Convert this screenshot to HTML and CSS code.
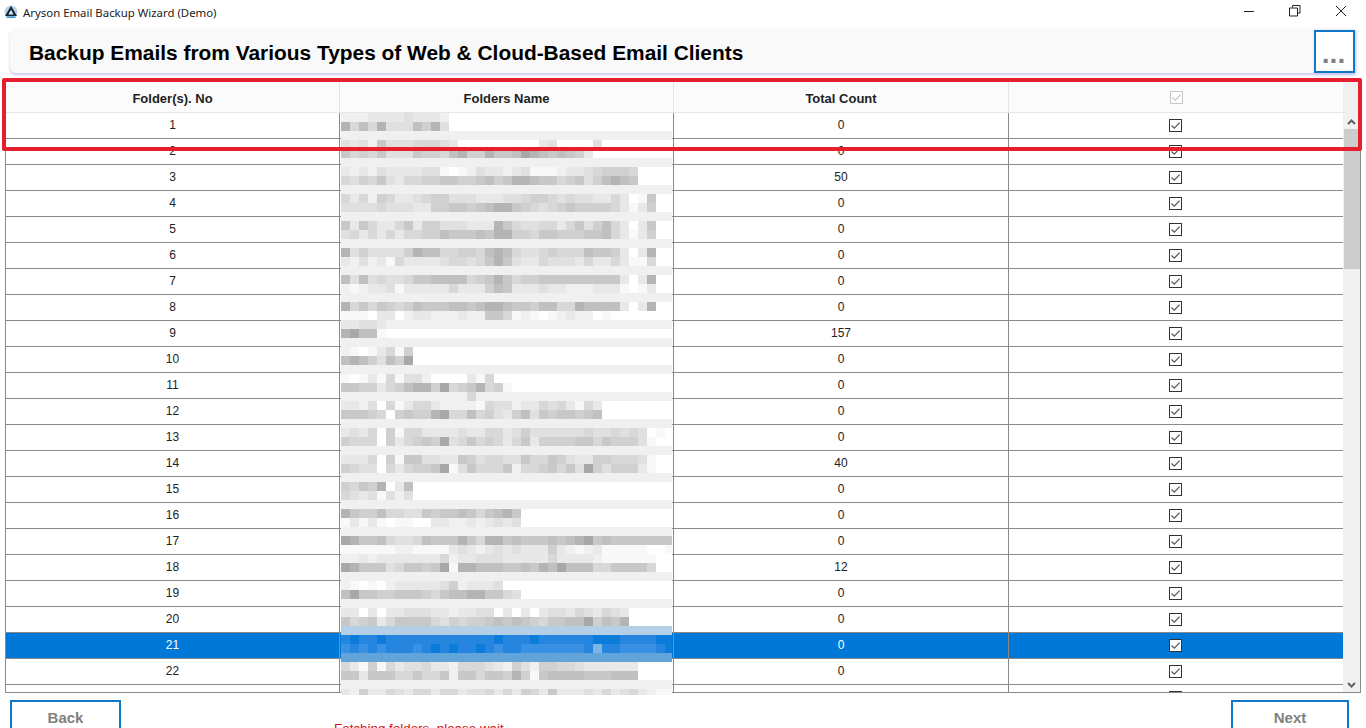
FILE: index.html
```html
<!DOCTYPE html>
<html lang="en">
<head>
<meta charset="utf-8">
<title>Aryson Email Backup Wizard (Demo)</title>
<link rel="stylesheet" href="styles.css">
</head>
<body>
<svg class="defs" width="0" height="0" aria-hidden="true">
  <symbol id="chk" viewBox="0 0 13 13">
    <rect x="0.5" y="0.5" width="12" height="12" fill="#fff" stroke="#333"/>
    <path d="M2.5 6.5 L5.3 9.2 L10.6 3.6" fill="none" stroke="#5a5a5a" stroke-width="1.3"/>
  </symbol>
  <symbol id="chk-off" viewBox="0 0 13 13">
    <rect x="0.5" y="0.5" width="12" height="12" fill="#fff" stroke="#c8c8c8"/>
    <path d="M2.5 6.5 L5.3 9.2 L10.6 3.6" fill="none" stroke="#c8c8c8" stroke-width="1.3"/>
  </symbol>
</svg>
<div class="app">
  <header class="titlebar">
    <svg class="logo" viewBox="0 0 14 14" width="14" height="14">
      <circle cx="7" cy="7" r="6.5" fill="#b9d2e6"/>
      <path d="M7 0.8 L13 11 H1 Z" fill="#14263c"/>
      <path d="M7 4.8 L9.6 9.4 H4.4 Z" fill="#dfe9f2"/>
      <path d="M2.4 12.2 H11.6" stroke="#3f9bd8" stroke-width="1.5"/>
    </svg>
    <span class="app-name">Aryson Email Backup Wizard (Demo)</span>
    <div class="win-controls">
      <svg width="12" height="12" viewBox="0 0 12 12"><path d="M1 6.5 H11" stroke="#222" stroke-width="1"/></svg>
      <svg width="12" height="12" viewBox="0 0 12 12"><path d="M3.5 2.5 V0.5 H11 V8 H9 M0.5 3 H8.5 V11 H0.5 Z" fill="none" stroke="#222"/></svg>
      <svg width="12" height="12" viewBox="0 0 12 12"><path d="M1 1 L11 11 M11 1 L1 11" stroke="#222" stroke-width="1"/></svg>
    </div>
  </header>
  <section class="banner">
    <h1 class="banner-title">Backup Emails from Various Types of Web &amp; Cloud-Based Email Clients</h1>
    <button class="more-btn" type="button"><span class="more-dots">...</span></button>
  </section>
  <main class="grid-wrap">
    <div class="grid-body">
      <table class="grid">
        <thead>
          <tr><th>Folder(s). No</th><th>Folders Name</th><th>Total Count</th><th><svg class="box box-head"><use href="#chk-off"/></svg></th></tr>
        </thead>
        <tbody>
          <tr><td>1</td><td></td><td>0</td><td><svg class="box"><use href="#chk"/></svg></td></tr>
          <tr><td>2</td><td></td><td>0</td><td><svg class="box"><use href="#chk"/></svg></td></tr>
          <tr><td>3</td><td></td><td>50</td><td><svg class="box"><use href="#chk"/></svg></td></tr>
          <tr><td>4</td><td></td><td>0</td><td><svg class="box"><use href="#chk"/></svg></td></tr>
          <tr><td>5</td><td></td><td>0</td><td><svg class="box"><use href="#chk"/></svg></td></tr>
          <tr><td>6</td><td></td><td>0</td><td><svg class="box"><use href="#chk"/></svg></td></tr>
          <tr><td>7</td><td></td><td>0</td><td><svg class="box"><use href="#chk"/></svg></td></tr>
          <tr><td>8</td><td></td><td>0</td><td><svg class="box"><use href="#chk"/></svg></td></tr>
          <tr><td>9</td><td></td><td>157</td><td><svg class="box"><use href="#chk"/></svg></td></tr>
          <tr><td>10</td><td></td><td>0</td><td><svg class="box"><use href="#chk"/></svg></td></tr>
          <tr><td>11</td><td></td><td>0</td><td><svg class="box"><use href="#chk"/></svg></td></tr>
          <tr><td>12</td><td></td><td>0</td><td><svg class="box"><use href="#chk"/></svg></td></tr>
          <tr><td>13</td><td></td><td>0</td><td><svg class="box"><use href="#chk"/></svg></td></tr>
          <tr><td>14</td><td></td><td>40</td><td><svg class="box"><use href="#chk"/></svg></td></tr>
          <tr><td>15</td><td></td><td>0</td><td><svg class="box"><use href="#chk"/></svg></td></tr>
          <tr><td>16</td><td></td><td>0</td><td><svg class="box"><use href="#chk"/></svg></td></tr>
          <tr><td>17</td><td></td><td>0</td><td><svg class="box"><use href="#chk"/></svg></td></tr>
          <tr><td>18</td><td></td><td>12</td><td><svg class="box"><use href="#chk"/></svg></td></tr>
          <tr><td>19</td><td></td><td>0</td><td><svg class="box"><use href="#chk"/></svg></td></tr>
          <tr><td>20</td><td></td><td>0</td><td><svg class="box"><use href="#chk"/></svg></td></tr>
          <tr class="selected"><td>21</td><td></td><td>0</td><td><svg class="box"><use href="#chk"/></svg></td></tr>
          <tr><td>22</td><td></td><td>0</td><td><svg class="box"><use href="#chk"/></svg></td></tr>
          <tr><td>23</td><td></td><td>0</td><td><svg class="box"><use href="#chk"/></svg></td></tr>
        </tbody>
      </table>
    </div>
    <div class="scrollbar">
      <div class="scroll-head"></div>
      <svg class="arrow" width="9" height="6" viewBox="0 0 9 6"><path d="M1 5 L4.5 1.5 L8 5" fill="none" stroke="#606060" stroke-width="2"/></svg>
      <div class="thumb"></div>
      <div class="scroll-fill"></div>
      <svg class="arrow" width="9" height="6" viewBox="0 0 9 6"><path d="M1 1 L4.5 4.5 L8 1" fill="none" stroke="#606060" stroke-width="2"/></svg>
    </div>
    <svg id="mosaic" class="mosaic" width="331" height="582" viewBox="0 0 331 582" aria-hidden="true"></svg>
  </main>
  <footer class="footer">
    <button class="nav-btn nav-back" type="button">Back</button>
    <span class="status">Fetching folders, please wait</span>
    <button class="nav-btn nav-next" type="button">Next</button>
  </footer>
  <div class="highlight"></div>
</div>
<script src="mosaic.js"></script>
</body>
</html>
```
FILE: styles.css
```css
* { box-sizing: border-box; }
html, body { margin: 0; height: 100%; overflow: hidden; background: #fff; }
body { font-family: "Liberation Sans", Arial, sans-serif; color: #000; }
.defs { position: absolute; }
.app { position: relative; display: flex; flex-direction: column; width: 1366px; height: 728px; overflow: hidden; }

.titlebar { display: flex; align-items: center; height: 28px; flex: none; padding: 0 19px 4px 4px; }
.logo { flex: none; }
.app-name { margin-left: 5px; font-family: "Noto Sans", sans-serif; font-size: 11.4px; color: #222; }
.win-controls { margin-left: auto; display: flex; gap: 34px; padding-bottom: 3px; }

.banner { display: flex; align-items: stretch; justify-content: space-between; flex: none; height: 45px; margin: 0 11px 0 10px; background: #f9f9f9; border-radius: 6px 0 0 6px; box-shadow: 0 2px 3px #c8c8f0; }
.banner-title { margin: 0; padding: 4px 0 0 19px; align-self: center; font-size: 20.9px; font-weight: 700; line-height: 24px; }
.more-btn { width: 41px; margin: 2px 0 0; padding: 0 2px 7px 0; border: 2px solid #0f78c8; background: #fff; display: flex; align-items: flex-end; justify-content: center; box-shadow: 1px 1px 3px #c8c8f0; }
.more-dots { font-family: "Liberation Sans", sans-serif; font-size: 28px; font-weight: 700; line-height: 20px; color: #808080; }

.grid-wrap { position: relative; display: flex; flex: none; height: 612px; width: 1356px; margin: 8px 0 0 5px; border-bottom: 1px solid #8a8a8a; }
.grid-body { flex: none; width: 1338px; overflow: hidden; }
.grid { width: 1338px; table-layout: fixed; border-collapse: collapse; font-size: 12px; }
.grid th { height: 31px; padding: 5px 0 0; font-size: 13px; font-weight: 700; color: #222; background: #fbfbfb; border: 1px solid #e6e6e6; border-top: 0; }
.grid td { height: 26px; padding: 0; text-align: center; color: #222; border: 1px solid #8a8a8a; }
.grid tbody tr:first-child td { border-top-color: #e6e6e6; }
.grid th:first-child, .grid tbody tr:first-child td:first-child { border-left-color: #e6e6e6; }
.grid th:nth-child(1) { width: 334px; }
.grid th:nth-child(2) { width: 334px; }
.grid th:nth-child(3) { width: 335px; }
.grid th:nth-child(4) { width: 335px; }
.grid .selected td { background: #0078d7; color: #fff; }
.box { display: block; position: relative; left: -1px; width: 13px; height: 13px; margin: 0 auto; }
.box-head { left: 0; top: -1px; }

.scrollbar { flex: none; display: flex; flex-direction: column; align-items: center; width: 18px; background: #f0f0f0; border-right: 1px solid #8a8a8a; }
.scroll-head { flex: none; width: 100%; height: 31px; background: #f0f0f0; }
.arrow { flex: none; margin: 7px 0 4px; }
.thumb { flex: none; width: 16px; height: 140px; background: #cdcdcd; }
.scroll-fill { flex: 1; }

.mosaic { position: absolute; left: 336px; top: 32px; }

.footer { position: relative; display: flex; justify-content: space-between; align-items: flex-start; flex: none; margin: 7px 17px 0 10px; }
.nav-btn { height: 40px; padding: 0 0 6px; background: #fff; border: 2px solid #0f78c8; font-family: "Liberation Sans", sans-serif; font-size: 15px; font-weight: 700; color: #808080; }
.nav-back { width: 111px; }
.nav-next { width: 118px; }
.status { position: absolute; left: 324px; top: 21px; font-size: 13.4px; color: #d0121b; }

.highlight { position: absolute; left: 2px; top: 78px; width: 1360px; height: 73px; border: 4px solid #e51f2e; border-radius: 2px; pointer-events: none; }
```
FILE: mosaic.js
```js
// Pixelated (redacted) folder names: one string per 9px mosaic row, one character per 9px block.
var SHADES = {
  '0': '#ffffff', '1': '#f8f8f8', '2': '#f0f0f0', '3': '#e8e8e8', '4': '#e0e0e0', '5': '#d8d8d8',
  '6': '#d0d0d0', '7': '#c8c8c8', '8': '#c0c0c0', '9': '#b4b4b4', 'a': '#a8a8a8',
  'u': '#b4cfe8', 'v': '#0b7cd9', 'w': '#2686df', 'x': '#3a90e2', 'y': '#62a4da', 'z': '#7cb4e4'
};
var BAND = '2222222222 2222222222 2222222222 2222222';
var ROWS = [
  '2223333433 32',
  '9585944486 94',
  BAND,
  '4342744455 5430000000 003400004',
  '7565744476 6589669778 a98787630',
  BAND,
  '3232433334 4101243323 4111233456 665',
  '5465743556 6776678679 9877567468 987',
  BAND,
  '5352653345 6644433344 5665454433 53017',
  '4444544433 6677678997 6545676666 53136',
  BAND,
  '7375335736 6444333975 4455357468 53037',
  '4535353556 6877787996 6577666778 53136',
  BAND,
  '9464444698 8556658985 4456555877 63039',
  '3242315333 3455457974 3354443533 53115',
  BAND,
  '8484544577 8888567975 6677777777 73039',
  '2123341333 3353336873 3343322233 31013',
  BAND,
  '9575765687 7788789987 7688559888 83039',
  '1110330233 2223227751 2101232201 00000',
  '3344322222 2222222222 2222222222 2222222',
  '9a881',
  BAND,
  '2101351600',
  '8986486a',
  BAND,
  '1013151442 000031500',
  '7766356899 6a5679561',
  '2222222222 2222522222 2222222222 2222222',
  '3324051355 3222215442 335453153',
  '7776506766 9a55856436 847677678',
  BAND,
  '3435061553 3334335534 6444444544 545401',
  '6555063567 6a45756535 7366667757 666410',
  BAND,
  '3335061774 4337645544 7557643366 555410',
  '6544053566 7a14755572 5567574a64 666310',
  BAND,
  '65769038',
  '54341424',
  BAND,
  '9766855447 6778757897',
  '1313101100 3322323434',
  BAND,
  'a977854458 7779759978 7778789a78 7777777',
  '1111112211 1134323434 3336321231 1111001',
  '2232333333 3523344433 3335333321 111110',
  'a977745776 7a19988877 8798a88855 777750',
  BAND,
  '2101023333 3462333400',
  '8a77667776 5788997754',
  BAND,
  '3303033444 3323344030 3034435435 43',
  '7567357777 5465667878 7657788a68 79',
  'uuuuuuuuuu uuuuuuuuuu uuuuuuuuuu uuuuuuu',
  'wvwwvwwwww wwwwwwwvww wvwwwwwwvv vwwwwvv',
  'xwxwxwwwxw vwvwwvwxww xxxxxxxwzw wxxxxwv',
  'yyyyyyyyyy yyyyyyyyyy yyyyyyyyyy yyyyyyy',
  '5316153445 3325554326 4266554333 33300',
  '7737775575 5727757769 6178888777 88800',
  BAND,
  '3263354355 3553445353 6537333435 3453211'
];
(function () {
  var NS = 'http://www.w3.org/2000/svg';
  var svg = document.getElementById('mosaic');
  var bg = document.createElementNS(NS, 'rect');
  bg.setAttribute('width', 331);
  bg.setAttribute('height', 582);
  bg.setAttribute('fill', '#fff');
  svg.appendChild(bg);
  ROWS.forEach(function (row, r) {
    var cells = row.replace(/ /g, '');
    for (var c = 0; c < cells.length && c < 37; c++) {
      var fill = SHADES[cells.charAt(c)];
      if (!fill || fill === '#ffffff') continue;
      var rect = document.createElementNS(NS, 'rect');
      rect.setAttribute('x', c * 9);
      rect.setAttribute('y', r * 9);
      rect.setAttribute('width', 9);
      rect.setAttribute('height', 9);
      rect.setAttribute('fill', fill);
      svg.appendChild(rect);
    }
  });
})();
```
